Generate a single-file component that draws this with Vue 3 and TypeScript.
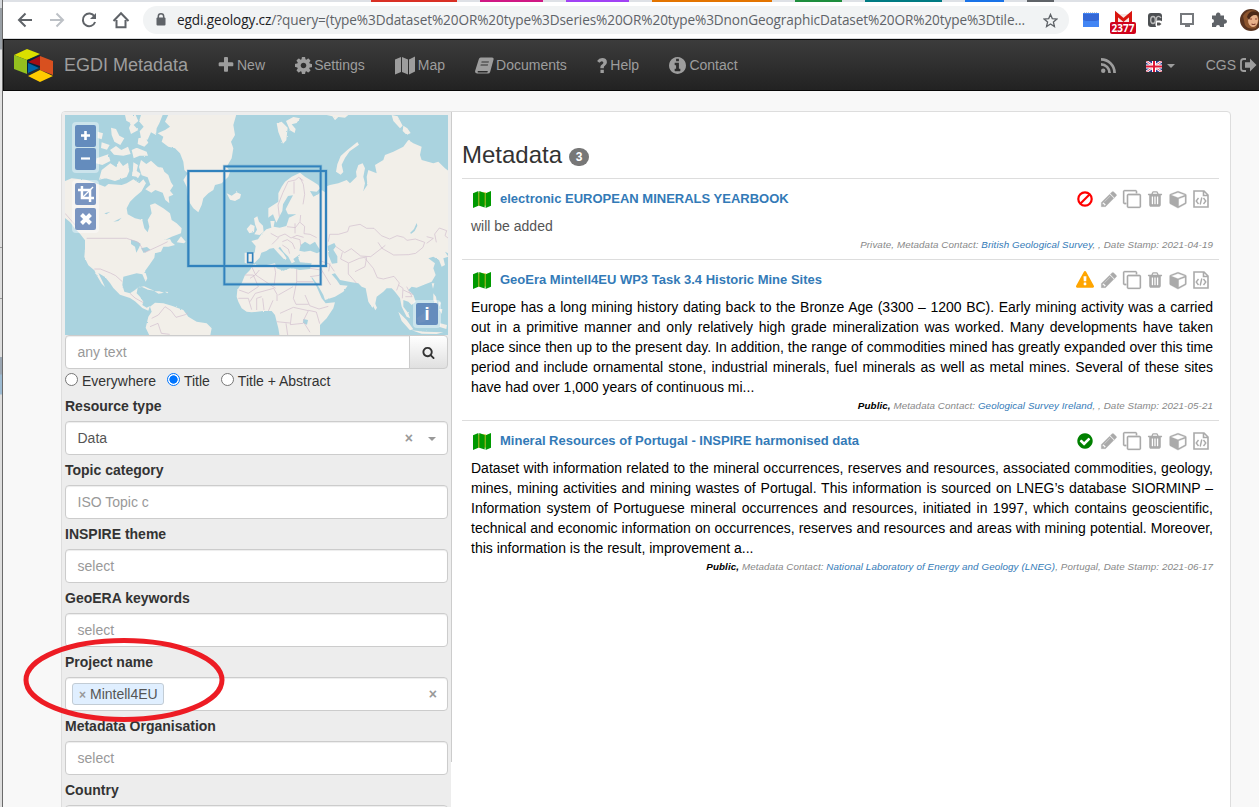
<script setup lang="ts">
interface NavItem { icon: string; label: string; w: number; h: number; box: string; slot: number }
interface Filter { label: string; kind: 'select' | 'value' | 'tag'; text: string }
interface Entry {
  title: string; status: 'ban' | 'warn' | 'check'; color: string; text: string; muted?: boolean
  access: string; contact: string; rest: string
}

const circle = 'M1664 896q0 209-103 385.5t-279.5 279.5-385.5 103-385.5-103-279.5-279.5-103-385.5 103-385.5 279.5-279.5 385.5-103 385.5 103 279.5 279.5 103 385.5z'
const icons: Record<string, string> = {
  plus: 'M1600 736v192q0 40-28 68t-68 28h-416v416q0 40-28 68t-68 28h-192q-40 0-68-28t-28-68v-416h-416q-40 0-68-28t-28-68v-192q0-40 28-68t68-28h416v-416q0-40 28-68t68-28h192q40 0 68 28t28 68v416h416q40 0 68 28t28 68z',
  cog: 'M1152 896q0-106-75-181t-181-75-181 75-75 181 75 181 181 75 181-75 75-181zm512-109v222q0 12-8 23t-20 13l-185 28q-19 54-39 91 35 50 107 138 10 12 10 25t-9 23q-27 37-99 108t-94 71q-12 0-26-9l-138-108q-44 23-91 38-16 136-29 186-7 28-36 28h-222q-14 0-24.5-8.5t-11.5-21.5l-28-184q-49-16-90-37l-141 107q-10 9-25 9-14 0-25-11-126-114-165-168-7-10-7-23 0-12 8-23 15-21 51-66.5t54-70.5q-27-50-41-99l-183-27q-13-2-21-12.5t-8-23.5v-222q0-12 8-23t19-13l186-28q14-46 39-92-40-57-107-138-10-12-10-24 0-10 9-23 26-36 98.5-107.5t94.5-71.5q13 0 26 10l138 107q44-23 91-38 16-136 29-186 7-28 36-28h222q14 0 24.5 8.5t11.5 21.5l28 184q49 16 90 37l142-107q9-9 24-9 13 0 25 10 129 119 165 170 7 8 7 22 0 12-8 23-15 21-51 66.5t-54 70.5q26 50 41 98l183 28q13 2 21 12.5t8 23.5z',
  map: 'M0 3L6 0.5V15.5L0 18zM7 0.5L13 3V18L7 15.5zM14 3L20 0V15L14 18z',
  book: 'M6 0h12q2 0 1.6 2L16 15q-.5 2-2.5 2H2.500q-2.500 0-2.500-2.500L4 2Q4.500 0 6 0zM7 4.200L6.700 5.400H14.300L14.700 4.200zM6.100 7.400L5.700 8.600H13.400L13.800 7.400zM3 14.200q-.8 1.600.5 1.600H13l.5-1.600z',
  help: 'M3.600 12.500h3.600v3.500H3.600zM3.500 11V9.500Q3.500 8 5.600 6.700 6.700 6 6.700 5 6.700 3.400 5 3.400 3.700 3.400 2.400 5L0 3.100Q2 0 5.400 0 10.400 0 10.500 4.500 10.500 7 8 8.500 7.200 9 7.200 10v1z',
  info: 'M1152 1376v-160q0-14-9-23t-23-9h-96v-512q0-14-9-23t-23-9h-320q-14 0-23 9t-9 23v160q0 14 9 23t23 9h96v320h-96q-14 0-23 9t-9 23v160q0 14 9 23t23 9h448q14 0 23-9t9-23zm-128-896v-160q0-14-9-23t-23-9h-192q-14 0-23 9t-9 23v160q0 14 9 23t23 9h192q14 0 23-9t9-23z' + circle,
  search: 'M1216 832q0-185-131.5-316.5t-316.5-131.5-316.5 131.5-131.5 316.5 131.5 316.5 316.5 131.500 316.500-131.500 131.500-316.500zm512 832q0 52-38 90t-90 38q-54 0-90-38l-343-342q-179 124-399 124-143 0-273.500-55.500t-225-150-150-225-55.500-273.500 55.500-273.500 150-225 225-150 273.500-55.500 273.500 55.500 225 150 150 225 55.500 273.500q0 220-124 399l343 343q37 37 37 90z',
  pencil: 'M491 1536l91-91-235-235-91 91v107h128v128h107zm523-928q0-22-22-22-10 0-17 7l-542 542q-7 7-7 17 0 22 22 22 10 0 17-7l542-542q7-7 7-17zm-54-192l416 416-832 832h-416v-416zm683 96q0 53-37 90l-166 166-416-416 166-165q36-38 90-38 53 0 91 38l235 234q37 39 37 91z',
  clone: 'M1664 1632v-1088q0-13-9.500-22.500t-22.500-9.500h-1088q-13 0-22.500 9.500t-9.500 22.500v1088q0 13 9.500 22.500t22.500 9.500h1088q13 0 22.500-9.500t9.500-22.500zm128-1088v1088q0 66-47 113t-113 47h-1088q-66 0-113-47t-47-113v-1088q0-66 47-113t113-47h1088q66 0 113 47t47 113zm-384-384v160h-128v-160q0-13-9.500-22.500t-22.500-9.500h-1088q-13 0-22.500 9.500t-9.500 22.500v1088q0 13 9.500 22.500t22.500 9.500h160v128h-160q-66 0-113-47t-47-113v-1088q0-66 47-113t113-47h1088q66 0 113 47t47 113z',
  trash: 'M704 1376v-704q0-14-9-23t-23-9h-64q-14 0-23 9t-9 23v704q0 14 9 23t23 9h64q14 0 23-9t9-23zm256 0v-704q0-14-9-23t-23-9h-64q-14 0-23 9t-9 23v704q0 14 9 23t23 9h64q14 0 23-9t9-23zm256 0v-704q0-14-9-23t-23-9h-64q-14 0-23 9t-9 23v704q0 14 9 23t23 9h64q14 0 23-9t9-23zm-544-992h448l-48-117q-7-9-17-11h-317q-10 2-17 11zm928 32v64q0 14-9 23t-23 9h-96v948q0 83-47 143.500t-113 60.500h-832q-66 0-113-58.500t-47-141.500v-952h-96q-14 0-23-9t-9-23v-64q0-14 9-23t23-9h309l70-167q15-37 54-63t79-26h320q40 0 79 26t54 63l70 167h309q14 0 23 9t9 23z',
  cube: 'M896 1629l640-349v-636l-640 233v752zm-64-865l698-254-698-254-698 254zm832-252v768q0 35-18 65t-49 47l-704 384q-28 16-61 16t-61-16l-704-384q-31-17-49-47t-18-65v-768q0-40 23-73t61-47l704-256q22-8 44-8t44 8l704 256q38 14 61 47t23 73z',
  check: 'M1412 734q0-28-18-46l-91-90q-19-19-45-19t-45 19l-408 407-226-226q-19-19-45-19t-45 19l-91 90q-18 18-18 46 0 27 18 45l362 362q19 19 45 19 27 0 46-19l543-543q18-18 18-45z' + circle,
  warn: 'M1024 1375v-190q0-14-9.500-23.500t-22.500-9.500h-192q-13 0-22.500 9.500t-9.500 23.500v190q0 14 9.500 23.500t22.500 9.500h192q13 0 22.500-9.500t9.500-23.500zm-2-374l18-459q0-12-10-19-13-11-24-11h-220q-11 0-24 11-10 7-10 21l17 457q0 10 10 16.500t24 6.500h185q14 0 23.500-6.500t10.500-16.500zm-14-934l768 1408q35 63-2 126-17 29-46.500 46t-63.500 17h-1536q-34 0-63.500-17t-46.500-46q-37-63-2-126l768-1408q17-31 47-49t65-18 65 18 47 49z'
}

const fa = '0 0 1792 1792'
const nav: NavItem[] = [
  { icon: 'plus', label: 'New', w: 16, h: 16, box: '160 128 1472 1536', slot: 19 },
  { icon: 'cog', label: 'Settings', w: 17, h: 17, box: '128 128 1536 1536', slot: 19.2 },
  { icon: 'map', label: 'Map', w: 20, h: 19, box: '0 0 20 18', slot: 23 },
  { icon: 'book', label: 'Documents', w: 19, h: 17, box: '0 0 20 17', slot: 21 },
  { icon: 'help', label: 'Help', w: 10, h: 15, box: '0 0 10.5 16', slot: 13.5 },
  { icon: 'info', label: 'Contact', w: 17, h: 17, box: '128 128 1536 1536', slot: 20.3 }
]

const tabs = [
  { x: 371, w: 86, c: '#d93025' }, { x: 480, w: 63, c: '#d01884' }, { x: 566, w: 63, c: '#a142f4' },
  { x: 652, w: 120, c: '#e37400' }, { x: 795, w: 47, c: '#1e8e3e' }, { x: 865, w: 77, c: '#007b83' },
  { x: 965, w: 39, c: '#1a73e8' }, { x: 1027, w: 27, c: '#5f6368' }
]

const filters: Filter[] = [
  { label: 'Resource type', kind: 'value', text: 'Data' },
  { label: 'Topic category', kind: 'select', text: 'ISO Topic c' },
  { label: 'INSPIRE theme', kind: 'select', text: 'select' },
  { label: 'GeoERA keywords', kind: 'select', text: 'select' },
  { label: 'Project name', kind: 'tag', text: 'Mintell4EU' },
  { label: 'Metadata Organisation', kind: 'select', text: 'select' },
  { label: 'Country', kind: 'select', text: '' }
]

const entries: Entry[] = [
  {
    title: 'electronic EUROPEAN MINERALS YEARBOOK', status: 'ban', color: '#f00', muted: true,
    text: 'will be added', access: 'Private', contact: 'British Geological Survey', rest: ', , Date Stamp: 2021-04-19'
  },
  {
    title: 'GeoEra Mintell4EU WP3 Task 3.4 Historic Mine Sites', status: 'warn', color: '#ffa500',
    text: 'Europe has a long mining history dating back to the Bronze Age (3300 – 1200 BC). Early mining activity was a carried out in a primitive manner and only relatively high grade mineralization was worked. Many developments have taken place since then up to the present day. In addition, the range of commodities mined has greatly expanded over this time period and include ornamental stone, industrial minerals, fuel minerals as well as metal mines. Several of these sites have had over 1,000 years of continuous mi...',
    access: 'Public', contact: 'Geological Survey Ireland', rest: ', , Date Stamp: 2021-05-21'
  },
  {
    title: 'Mineral Resources of Portugal - INSPIRE harmonised data', status: 'check', color: '#008000',
    text: 'Dataset with information related to the mineral occurrences, reserves and resources, associated commodities, geology, mines, mining activities and mining wastes of Portugal. This information is sourced on LNEG’s database SIORMINP – Information system of Portuguese mineral occurrences and resources, initiated in 1997, which contains geoscientific, technical and economic information on occurrences, reserves and resources and areas with mining potential. Moreover, this information is the result, improvement a...',
    access: 'Public', contact: 'National Laboratory of Energy and Geology (LNEG)', rest: ', Portugal, Date Stamp: 2021-06-17'
  }
]
</script>

<template>
  <div class="screen">
    <div class="behind"></div>
    <div class="window">
      <div class="tabstrip">
        <svg width="1256" height="2" viewBox="3 0 1256 2">
          <rect v-for="t in tabs" :key="t.x" :x="t.x" y="0" :width="t.w" height="2" :fill="t.c" />
        </svg>
      </div>
      <div class="toolbar">
        <svg class="controls" width="140" height="36" viewBox="3 2 140 36" fill="none" stroke="#5f6368" stroke-width="2">
          <path d="M32 20H19M25.500 13.500L19 20l6.500 6.500" />
          <path d="M50 20h13M56.500 13.500L63 20l-6.500 6.500" stroke="#bdc1c6" />
          <path d="M94.500 16.500a6.300 6.300 0 1 0 .6 5.500" /><path d="M96 13v6h-6z" fill="#5f6368" stroke="none" />
          <path d="M116.500 20v7.200h9V20M113.500 21l7.500-7.700 7.500 7.700" />
        </svg>
        <div class="address">
          <svg class="lock" width="10" height="13" viewBox="0 0 10 13"><path d="M2.300 5V3.500a2.700 2.700 0 0 1 5.400 0V5" fill="none" stroke="#5f6368" stroke-width="1.500" /><rect x="0.500" y="4.500" width="9" height="8" rx="1" fill="#5f6368" /></svg>
          <span class="url"><b>egdi.geology.cz</b>/?query=(type%3Ddataset%20OR%20type%3Dseries%20OR%20type%3DnonGeographicDataset%20OR%20type%3Dtile...</span>
          <svg class="star" width="15" height="15" viewBox="0 0 16 16"><path d="M8 1.500l1.900 4.500 4.900.4-3.700 3.200 1.100 4.800L8 11.800l-4.200 2.600 1.100-4.800L1.200 6.400 6.100 6z" fill="none" stroke="#5f6368" stroke-width="1.400" /></svg>
        </div>
        <svg class="extensions" width="190" height="36" viewBox="1069 2 190 36">
          <path d="M1083 13h16v14h-16z" fill="#4285f4" /><path d="M1083 14h16v6l-3 1h-10l-3-1z" fill="#3367d6" /><path d="M1084 12.500h14" stroke="#ccc" stroke-dasharray="1 1" />
          <path d="M1115 14h17v9h-17z" fill="#f5e6e4" /><path d="M1116.500 23v-9l7 6 7-6v9" fill="none" stroke="#d9150f" stroke-width="3" />
          <rect x="1110" y="22" width="26" height="12" rx="2" fill="#d0021b" />
          <text x="1123" y="32" text-anchor="middle" class="count">2377</text>
          <rect x="1148" y="13" width="14" height="14" rx="3" fill="#4c4f52" /><ellipse cx="1153" cy="20" rx="2.300" ry="3.500" fill="none" stroke="#bbb" stroke-width="1.300" /><path d="M1161 18q-2-3-4.500-.5v4" fill="none" stroke="#bbb" stroke-width="1.300" /><rect x="1155.500" y="20.500" width="7" height="7" rx="2.500" fill="#fff" /><path d="M1157 22.500h2.500l2 1.500-2 1.500H1157z" fill="#555" />
          <path d="M1181 14h12v10h-12z" fill="none" stroke="#76797d" stroke-width="2" /><path d="M1185 25h5v2h-5z" fill="#76797d" />
          <path d="M1212 15.500h4a2.300 2.300 0 1 1 4.400 0h3.600v3.800a2.300 2.300 0 1 1 0 4.400V27h-4a2 2 0 0 0-4 0h-4v-4a2 2 0 1 0 0-4z" fill="#5f6368" />
          <circle cx="1251" cy="20" r="11" fill="#5a3420" /><path d="M1243 16q5-8 13-5l3 9-3 8q-8 2-11-3z" fill="#8c542d" /><ellipse cx="1253" cy="20" rx="5" ry="7" fill="#e7b18b" /><path d="M1247 17q2-8 11-5l1 4q-7-3-10 4z" fill="#4b2817" /><path d="M1250 19h2m3 0h2M1251.500 24q2 1 4 0" stroke="#8c3f30" />
        </svg>
      </div>

      <header class="navbar">
        <svg class="logo" width="40" height="33" viewBox="0 0 40 33">
          <path d="M0 6L13 0l13 5-13 6z" fill="#dbe000" /><path d="M0 6l13 5v14L0 20z" fill="#93c01f" />
          <path d="M13 11l13-5v12l-11 6-2-1z" fill="#00233e" /><path d="M14 13l12-6v10z" fill="#a30d14" /><path d="M14 14l11 5-11 5z" fill="#0065a8" />
          <path d="M26 7l13 5v14l-13-5z" fill="#d8501f" /><path d="M14 27l12-6 13 6-13 6z" fill="#ffcb00" />
        </svg>
        <span class="brand">EGDI Metadata</span>
        <nav>
          <a v-for="n in nav" :key="n.label">
            <span class="slot" :style="{ width: n.slot + 'px' }"><svg :width="n.w" :height="n.h" :viewBox="n.box" fill-rule="evenodd"><path :d="icons[n.icon]" /></svg></span>{{ n.label }}
          </a>
        </nav>
        <div class="account">
          <svg class="rss" width="15" height="15" viewBox="0 0 15 15"><circle cx="2.200" cy="12.800" r="2.200" /><path d="M0 6.400a8.600 8.600 0 0 1 8.600 8.600M0 1.400A13.600 13.600 0 0 1 13.600 15" fill="none" stroke="#9d9d9d" stroke-width="2.700" /></svg>
          <svg class="flag" width="16" height="11" viewBox="0 0 16 11"><path d="M0 0h16v11H0z" fill="#283d8f" /><path d="M0 0l16 11M16 0L0 11" stroke="#fff" stroke-width="2.600" /><path d="M0 0l16 11M16 0L0 11" stroke="#e0546c" stroke-width="1" /><path d="M8 0v11M0 5.500h16" stroke="#fff" stroke-width="4" /><path d="M8 0v11M0 5.500h16" stroke="#df1837" stroke-width="2" /></svg>
          <i class="caret"></i>
          <span class="org">CGS</span>
          <svg width="17" height="14" viewBox="0 0 17 14"><path d="M6 1H3.500Q1 1 1 3.500v7Q1 13 3.500 13H6" fill="none" stroke="#9d9d9d" stroke-width="1.800" /><path d="M5 4.200h5V.5L16.500 7 10 13.500V9.800H5z" /></svg>
        </div>
      </header>

      <div class="page">
        <div class="panel">
          <aside>
            <div class="divider"></div>
            <div class="map">
              <svg width="383" height="220" viewBox="30 30 1149 660" preserveAspectRatio="none">
                <defs><filter id="coast" x="0" y="0" width="1" height="1"><feTurbulence type="fractalNoise" baseFrequency="0.12" numOctaves="2" seed="4" /><feDisplacementMap in="SourceGraphic" scale="5" xChannelSelector="R" yChannelSelector="G" /></filter></defs>
                <path d="M30 30h1149v660H30z" fill="#aad3df" />
                <g filter="url(#coast)" fill="#f2efe9">
                  <path d="M0 30h1200v660H0z" fill="#aad3df" />
                  <path d="M20 232l30-12 45 5 20 7 35 13 10-8 40 3 15-5 20-12 18 12 12-12 8 12-15 25-18 15-15 15-10 20 3 18 22 12 22 5 6 25 10 12 5-17-5-20 12-20-5-25 15-5 25 15 20 15 5 20 15 10 15 15-2 15-28 10-20 10 15-3 5 10 10 8-20 5h-15l-7 15-18 5-2 13-15 22-13 18 7 22-5 10-10-22-17-3-20 5-20 5-3 25 6 20 17 5 15-10 8-7-3 17 10 10 10 15-3 10 13 8 10-5-5 14-18-8-22-20-15-10-30-10-20-20-10-15-15-18-20-12 10 20 10 22-10-10-15-25-7-15-18-15-12-25 2-25v-25l-15-20-15-15-15-20-25-20z" />
                  <path d="M285 605l15-12 25 2 25 7 35 13 15 20 25 15 30 5 15 15-5 25H285l-13-27 8-33 10-15z" />
                  <path d="M342 25l-12 25 15 15-15 10-22 10 17 10-5 15 20 15 20 5 15 15 10 25 3 25 10 10-13 20 10 20 3 25 7 25 10 15 15 12 10-22 5-20 15-15 15-10 5-15 20-5 20-20 5-15-10-15 15-25 5-30-7-20 12-20-5-30 10-35z" />
                  <path d="M515 265l15 7 15-10 13 6-3 12-15 8-15-4zM365 412l13-18 14 16-5 5zM245 548l22-4 18 8 14 5-20-3-18-8zM298 559l15 0 14 4-16 3zM330 560l10 1-3 4z" />
                  <path d="M210 30l32 0 8 18-14 12 14 15-22 12-6-18 6-14-14-8zM258 30h65l-10 25-8 15-2 20-15-8-10 22-20-5-4-20 12-14-14-16zM250 100l20-5 10 18-12 12-20-8zM128 80l16 5-4 18-12-4zM168 68l15 4 10 20 15 8-12 20-18-10-8-20zM140 112l24 8-8 14-18-5zM165 135l18-12 16 12 20-10 8 22-22 5-28-3zM230 135l15-7 30 12 4 12-25 0-18 8zM125 160l35-12 6 20-24 12-20-5zM140 195l26-20 18 12 8-20 12 16 15-10 4 25-8 18-35 12-28-8-20 4zM235 172l14 8-4 18 12 8-8 14-16-14zM232 200l15 3-2 12-14-2zM258 165l16 12 14-10 20 18 15 3 5 12 12 10 8 22 7 10-10 15 10 12-14 6 2 20-12-10-8-22-22-8-12 8-18-10 15-14-8-22-18-6-8-25zM252 235l15 8-8 16-15-5z" />
                  <path d="M575 372l12-14 12 5-2 18-14 4zM597 340l10-6 5 16 12 12 2 18-12 10-16-2 8-14-6-16z" />
                  <path d="M1030 620l25 25 20 28-10 3-25-28zM1070 676l40 4 55 2-20 5-45-1zM1085 640l22-15 8-25 12 5-6 22-10 22-18 5zM1130 535l8 0-4 16zM1135 565l8 10 4 25-12-14zM1150 590l8 3-5 12zM1156 655l20 5-2 12-20-6zM1152 612l10 0-2 15z" />
                  <g transform="translate(585 0)">
                    <path d="M55 335l0-25 15-10 15-10 0-25 10-20 10-15 20-15 25-12 15 12 25 15 15 10 5 10-10 10-20-2 10 17 15-7 10-13 10 7 0-17 15-5 25-5 25-10 10 10 20-20-2-15 7-20 13-5 7 15-5 25 5 20-5 23 12-18-2-25 5-20 25 10-5-25 25-15 5-15 25-10 30-15 15-20 15 10 25 10-5 25 5 15 35 10 15-5 20 20 20 15v245l-20-10 10 15-15 5 5 20-10 5-8-20-17-10-15 5 20 15-5 15 7 20-12 20-25 10-20 8-15-3-10 10 15 15 7 20-12 10-10-10-15-5 0 20 15 20 5 15-10-5-15-30-5-25-15-20-10-10h-15l-10 10-20 15-5 25-8 8-12-18-8-40-12-5-10-10-20-3-35-7-15-20-10 3 15 17 10 15 23 2-13 18-25 15-30 10-5-15-20-35-15-20 0 5 15 25 15 35 12 15 28-3-5 18-20 30-20 20v40H90l-5-30-5-20-5-20-10-12H40l-35 4-15-2-15-10-10-20-5-15 2-20 13-20 10-25 15-15 10-17 30 4 35-7 5 15 20 7 20-7 30 5 30-3 5-17-35-3-5-12 5-12-20 14 5 8-10 5-10-20-15-15-10-15-5 5 15 15 10 15-5 6-20-21-14-16-12 2-10 7-15 5-5 15-15 15-20 5-10-5v-30h30l3-20-13-15 20-5 10-15 15-15 15-5-3-20 13 0-3 17 18 3 20-5 5-15 3-10 22-10h-25l-7-15 10-20 12-22-15 2-15 25-2 20-8 15-10 20-10-25-15 10z" />
                    <path d="M258 200l4-22 10-25 20-18 30-24 5 8-28 20-14 20-10 20 5 22-8 8zM80 55l15-5 18 18-4 38-10 10-14-35zM108 48l22-12 20 4-10 14-15 4 12 14-3 12-14-8zM425 30l18 4 15 28-8 8-20-22zM460 62l12 8 10 14-12 6-12-12zM230 30l65 0-10 8-20-2-10 10-8-12zM373 590l8 18-5 8-5-10zM125 490l18 3-5 3z" />
                    <path d="M148 437l4-17 13-10 15 9 15-9 8 14 10 15-12 6-20-8-18 3zM233 423l20-9 5 10-8 10 12 20v20l-16 2-10-24zM160 642l14 3-3 14-12-5zM480 384l12-12 8-18 2 8-8 16-10 8z" fill="#aad3df" />
                  </g>
                  <path d="M228 404l15 4 14 8-5 12-8 15-4-18-12-8zM258 430l8 14 20-10-10-8zM175 350l25-12-10 10zM148 325l18-5-12 8z" fill="#aad3df" />
                </g>
                <g fill="none" stroke="#d0bccd" stroke-width="2" stroke-linejoin="round">
                  <path d="M95 400h120l35 12 20 30 48-22 20-10M30 325l35 40M118 492l18 0 30 12 16 8 20 18M225 565l15 14 25 14M290 640l20-10 20-25 18 12 15 20 28-8 8-6M285 665l24-10 10 30 25 3" />
                  <g transform="translate(585 0)">
                    <path d="M88 335l-4-35 15-38 15-32 22-5 10-8 14 10M132 230v36M150 218l10 20 4 30-5 30M152 330l-2 20-14 18-25-3M62 385l24 13-20 20M85 395l20-8 18 12 18-8 20 6M97 410l15-6 15 10 8 18M97 420l18 12 4 14M128 398l22 6 2 18M135 385v-30M150 352l14 12-2 22 18 2 20 10M180 490l32 5-2-28 28 10 15 22M235 410l4-22 26 0 28-8 5-16 32-6 20 12 22 0 22 22 25 10 22-10 20 5 10 9 25-4 28 10-5 15-22 18-22 4-44 1-35-20-12-18M258 425l26 18 20-12 28 22 30 2 44-34M277 442l-5 20 24 12 32-14 22-4M212 490l30 50M240 475l-4 24M295 475v32l25 28M315 500l30-15 5-28M345 460l25 30 12 28 18 4 32-8 16 20-8 22M445 540l14 10-2 30M470 545l16 30-20 0M460 555l30 14M5 485l12 25 60 40M72 478l5 25-5 40M140 492v38h50M0 590l16-25 55-15 10 18v20M140 530l-10 50 8 18h38M85 570l44-25M165 570l14 32 28 10 28-8M-15 510h25l15 35-30 20-28-10M20 615v-35l15-5M42 615l-4-35M55 618l14-32M90 625l40-18 45 10-15 30M125 625l-4 34 38-4M80 650l40 4M-35 580h30l10 34M108 655l5 35M160 650l20 32M175 616l24 5 10 35M595 400l-10-8 5-15-22-8-14 18 5 25M530 415l20-15-20-5M180 515l28-4 10-12M0 520l16-10 12-15" />
                  </g>
                </g>
                <g fill="none" stroke="#3182bd"><path d="M400 198h413v285H400zM508 184h289v354H508z" stroke-opacity=".35" stroke-width="9" /><path d="M400 198h413v285H400z" stroke-width="6" /><path d="M508 184h289v354H508z" stroke-width="5" /><path d="M578 444h15v29h-15z" stroke-width="5" /></g>
              </svg>
              <div class="ctl zoomers">
                <span><svg width="9" height="9" viewBox="0 0 9 9"><path d="M4.500 0v9M0 4.500h9" stroke="#fff" stroke-width="2.600" /></svg></span>
                <span><svg width="9" height="9" viewBox="0 0 9 9"><path d="M0 4.500h9" stroke="#fff" stroke-width="2.200" /></svg></span>
              </div>
              <div class="ctl tools">
                <span><svg width="16" height="16" viewBox="0 0 17 17" fill="none" stroke="#fff" stroke-width="2.600"><path d="M0 4.200h12.800V17M4.200 0v12.800H17" /><path d="M4 13L16 1" stroke-width="1.400" /></svg></span>
                <span><svg width="12" height="12" viewBox="0 0 12 12"><path d="M1.500 1.500l9 9M10.500 1.500l-9 9" stroke="#fff" stroke-width="4" /></svg></span>
              </div>
              <div class="ctl about"><span>i</span></div>
            </div>
            <div class="search"><div class="input">any text</div><button><svg width="13" height="13" :viewBox="fa"><path :d="icons.search" /></svg></button></div>
            <div class="radios">
              <label><i></i>Everywhere</label><label><i class="on"></i>Title</label><label><i></i>Title + Abstract</label>
            </div>
            <div v-for="f in filters" :key="f.label" class="field">
              <div class="label">{{ f.label }}</div>
              <div class="box">
                <span v-if="f.kind === 'tag'" class="tag"><em>×</em>{{ f.text }}</span>
                <span v-else :class="f.kind">{{ f.text }}</span>
                <em v-if="f.kind === 'value' || f.kind === 'tag'" class="clear">×</em>
                <i v-if="f.kind === 'value'" class="arrow"></i>
              </div>
            </div>
          </aside>
          <main>
            <h1>Metadata <span>3</span></h1>
            <article v-for="e in entries" :key="e.title">
              <div class="head">
                <svg class="mapicon" width="18" height="17" viewBox="0 0 20 18" preserveAspectRatio="none"><path d="M5.800 1.500h8.400v14H5.800z" fill="#c8b400" /><path d="M0 2.500L6 0V15.500L0 18zM7 0L13 2V17.500L7 15.500zM14 2.500L20 0V15.500L14 18z" fill="#090" /></svg>
                <a>{{ e.title }}</a>
                <div class="actions">
                  <span><svg v-if="e.status === 'ban'" width="16" height="16" viewBox="0 0 16 16" fill="none" stroke="#f00" stroke-width="2.200"><circle cx="8" cy="8" r="6.700" /><path d="M3.500 12.500l9-9" /></svg>
                    <svg v-else width="18" height="18" :viewBox="fa" :fill="e.color" fill-rule="evenodd"><path :d="icons[e.status]" /></svg></span>
                  <span><svg class="bold" width="18" height="18" :viewBox="fa"><path :d="icons.pencil" /></svg></span>
                  <span><svg class="bold" width="18" height="18" :viewBox="fa"><path :d="icons.clone" /></svg></span>
                  <span><svg width="18" height="18" :viewBox="fa"><path :d="icons.trash" /></svg></span>
                  <span><svg class="bold" width="18" height="18" viewBox="-64 0 1792 1792"><path :d="icons.cube" /></svg></span>
                  <span><svg width="16" height="18" viewBox="0 0 16 18" fill="none" stroke="#aaa" stroke-width="1.600"><path d="M1 1h10l4 4v12H1zM10.500 1v4.500H15" /><path d="M5.500 8L3.200 11l2.300 3M10.500 8l2.300 3-2.300 3M8.800 7.500l-1.600 7" stroke-width="1.400" /></svg></span>
                </div>
              </div>
              <p :class="{ muted: e.muted }">{{ e.text }}</p>
              <footer><template v-if="e.access === 'Private'">Private, </template><b v-else>Public, </b>Metadata Contact: <a>{{ e.contact }}</a>{{ e.rest }}</footer>
            </article>
          </main>
        </div>
      </div>
    </div>
    <svg class="mark" width="204" height="86" viewBox="0 0 204 86"><ellipse cx="102" cy="43" rx="98" ry="39.500" fill="none" stroke="#ed1c24" stroke-width="5" /></svg>
  </div>
</template>

<style>
body { margin: 0; overflow: hidden; }
</style>

<style scoped>
* { box-sizing: border-box; }
.screen { position: relative; width: 1259px; height: 807px; overflow: hidden; display: flex; font: 14px/20px "Liberation Sans", Arial, sans-serif; color: #333; }
svg { display: block; flex: none; }
.behind { width: 3px; flex: none; border-right: 1px solid #6b6b6b; background: linear-gradient(#d5d8dc 8px, #999fa5 8px, #999fa5 49px, #e2e2e2 50px, #dedede 247px, #999 247px, #999 248px, #dedede 248px, #dedede 298px, #999 298px, #999 299px, #dedede 299px, #dedede 357px, #9ba6b2 357px, #9ba6b2 374px, #9dbbd2 375px, #9dbbd2 394px, #dedede 395px); }
.window { width: 1256px; flex: none; display: flex; flex-direction: column; }
.tabstrip { height: 2px; background: #dee1e6; flex: none; }
.toolbar { height: 37px; flex: none; background: #fff; border-bottom: 1px solid #d8dadd; display: flex; }
.address { width: 926px; height: 28px; margin-top: 4px; border-radius: 14px; background: #f1f3f4; display: flex; align-items: center; flex: none; }
.lock { margin: 0 11px 1px 13px; }
.url { width: 860px; flex: none; font: 13.600px/28px "Open Sans", "Noto Sans", sans-serif; color: #5f6368; white-space: nowrap; letter-spacing: -.1px; }
.url b { font-weight: 400; color: #202124; }
.star { margin-left: 6px; }
.extensions { flex: none; }
.count { font: bold 10px "Open Sans", sans-serif; fill: #fff; }
.navbar { height: 52px; flex: none; border: 1px solid #080808; border-right: 0; background: linear-gradient(#3c3c3c, #222); display: flex; align-items: center; color: #9d9d9d; fill: #9d9d9d; }
.logo { margin-left: 10px; }
.brand { margin-left: 10px; width: 154px; font-size: 18px; white-space: nowrap; }
nav { display: flex; gap: 30px; }
nav a { display: flex; align-items: center; white-space: nowrap; }
.account { margin-left: auto; display: flex; align-items: center; padding-right: 2px; }
.rss { margin-right: 30px; }
.flag { margin-top: 2px; }
.caret { border: 4px solid transparent; border-top-color: #9d9d9d; border-bottom: 0; margin: 2px 31px 0 5px; }
.org { margin-right: 4px; }
.page { flex: 1; background: #f8f8f8; padding: 20px 28px 0 58px; }
.panel { width: 1170px; height: 720px; border: 1px solid #ddd; border-radius: 4px; background: #fff; display: flex; }
aside { position: relative; width: 389px; height: 720px; flex: none; background: #ededed; padding: 3px 3px 0 3px; border-radius: 3px 0 0 0; }
.divider { position: absolute; right: -1px; top: 0; width: 1px; height: 650px; background: #ccc; }
.map { position: relative; width: 383px; height: 220px; overflow: hidden; }
.ctl { position: absolute; border-radius: 4px; background: rgba(255,255,255,.4); display: flex; flex-direction: column; padding: 3px; }
.ctl span { width: 21px; height: 22px; background: rgba(70,115,175,.78); color: #fff; display: flex; align-items: center; justify-content: center; border-radius: 2px; }
.zoomers { left: 7px; top: 7px; gap: 1px; }
.zoomers span { padding-bottom: 2px; }
.tools { left: 7px; top: 65px; gap: 3px; }
.tools span { background: rgba(90,125,180,.8); }
.about { right: 7px; bottom: 7px; }
.about span { width: 22px; font: bold 18px/21px "Liberation Sans", sans-serif; }
.search { display: flex; width: 383px; height: 34px; }
.input { flex: 1; border: 1px solid #ccc; border-radius: 4px 0 0 4px; padding: 6px 12px 6px 11.500px; background: #fff; color: #999; box-shadow: inset 0 1px 1px rgba(0,0,0,.075); }
button { width: 39px; margin-left: -1px; padding: 0; border: 1px solid #ccc; border-radius: 0 4px 4px 0; background: linear-gradient(#fff, #e0e0e0); display: flex; align-items: center; justify-content: center; fill: #333; }
.radios { height: 27px; display: flex; gap: 11px; padding-top: 2px; }
.radios label { display: flex; align-items: center; height: 20px; white-space: nowrap; }
.radios i { width: 13px; height: 13px; border: 1px solid #767676; border-radius: 50%; background: #fff; margin: -3px 4px 0 0; }
.radios i.on { border-color: #0075ff; background: radial-gradient(circle, #0075ff 3.800px, #fff 4.500px); }
.field { height: 64px; }
.label { font-weight: 700; height: 25px; }
.box { height: 34px; width: 383px; border: 1px solid #ccc; border-radius: 4px; background: #fff; box-shadow: inset 0 1px 1px rgba(0,0,0,.075); display: flex; align-items: center; padding: 0 10px 0 11.500px; color: #999; }
.value { color: #555; }
.clear { margin-left: auto; font: bold 14px/20px "Liberation Sans", sans-serif; color: #999; }
.arrow { border: 4px solid transparent; border-top: 4px solid #999; border-bottom: 0; margin: 1px 1px 0 15px; }
.tag { margin-left: -5.500px; height: 22px; padding: 0 5.500px 0 6px; border: 1px solid #c2ccd5; border-radius: 3px; background: #e0efff; color: #555; line-height: 20px; }
.tag em { font: bold 12px/20px "Liberation Sans", sans-serif; color: #999; margin-right: 4px; }
main { flex: 1; padding: 26px 11px 0 11px; }
h1 { margin: 0 0 10px; height: 30px; font-size: 24px; font-weight: 400; line-height: 30px; display: flex; align-items: center; gap: 7px; padding-top: 4px; }
h1 span { width: 20px; height: 18px; border-radius: 9px; background: #777; color: #fff; font: bold 12px/18px "Liberation Sans", sans-serif; text-align: center; margin-top: 3px; }
article { border-top: 1px solid #ddd; padding: 0 6px 0 9px; }
.head { display: flex; align-items: center; height: 37px; padding-top: 4px; }
.head a { margin: -1px 0 0 9px; color: #337ab7; font-weight: 700; font-size: 13px; }
.mapicon { margin: -1px 0 0 2px; }
.actions { margin-left: auto; margin-top: -1px; display: flex; fill: #aaa; }
.bold { stroke: #aaa; stroke-width: 30px; overflow: visible; }
.actions span { width: 23.200px; display: flex; align-items: center; justify-content: center; }
p { margin: 0; text-align: justify; color: #000; }
p.muted { color: #555; }
footer { height: 23px; font: italic 9.800px/18px "Liberation Sans", sans-serif; letter-spacing: .093px; color: #888; text-align: right; }
footer a { color: #337ab7; }
footer b { color: #000; }
.mark { position: absolute; left: 22px; top: 637px; }
</style>
